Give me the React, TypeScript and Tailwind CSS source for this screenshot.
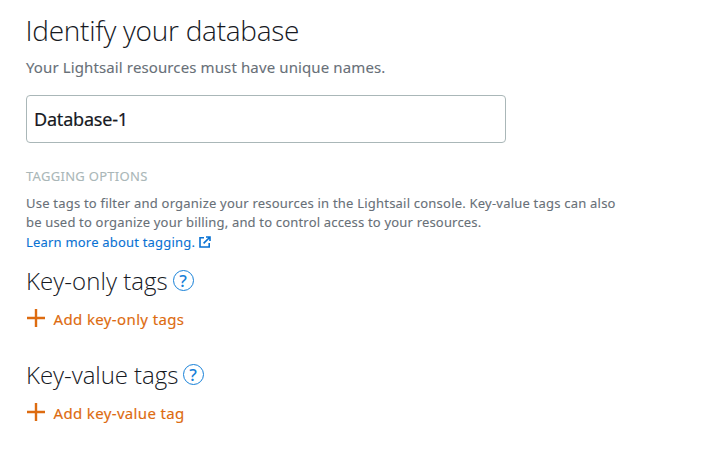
import React from 'react';

function ExternalIcon() {
  return (
    <svg className="-mt-px" width="12" height="12" viewBox="0 0 12 12" fill="none" stroke="#0972d3" strokeWidth="1.6">
      <path d="M5 1.8H1V11H10.2V7M7 1H11V5M10.8 1.2L4.6 7.4" />
    </svg>
  );
}

function TagSection({ title, action, titleClass, actionClass }: { title: string; action: string; titleClass: string; actionClass: string }) {
  return (
    <section className="h-[94px]">
      <div className="flex h-8 items-center">
        <h2 className={`-mt-[2px] shrink-0 font-['Open_Sans',sans-serif] whitespace-nowrap text-[24px] leading-8 font-light ${titleClass}`}>{title}</h2>
        <button className="-mt-[3px] flex h-[21px] w-[21px] shrink-0 items-center justify-center rounded-full border border-[#1680d8] text-[17px] leading-5 font-medium text-[#1680d8]">?</button>
      </div>
      <button className="mt-[9px] flex h-6 items-center text-[#dd6b10]">
        <svg className="-mt-[3px] mr-[8.5px] ml-px" width="18" height="18" viewBox="0 0 18 18" fill="none" stroke="currentColor" strokeWidth="2.4">
          <path d="M9 0V18M0 9H18" />
        </svg>
        <span className={`whitespace-nowrap text-[15px] leading-6 [-webkit-text-stroke:0.15px_currentColor] ${actionClass}`}>{action}</span>
      </button>
    </section>
  );
}

export default function App() {
  return (
    <main className="h-[461px] w-[704px] overflow-hidden bg-white pt-[10px] pl-[26px] font-['Noto_Sans',sans-serif] text-[#16191f]">
      <h1 className="-ml-[0.5px] h-10 font-['Open_Sans',sans-serif] text-[28px] leading-10 font-light tracking-[-0.26px] whitespace-nowrap">Identify your database</h1>
      <p className="mt-[5px] h-6 text-[15px] leading-6 tracking-[0.12px] whitespace-nowrap text-[#687078] [-webkit-text-stroke:0.1px_currentColor]">Your Lightsail resources must have unique names.</p>
      <input className="mt-4 block h-12 w-[480px] rounded-[4px] border border-[#aab7b8] bg-white px-[7px] text-[18px] tracking-[-0.2px] text-[#16191f] outline-none [-webkit-text-stroke:0.2px_currentColor]" defaultValue="Database-1" />
      <h3 className="mt-[23px] h-5 text-[13px] leading-5 font-normal tracking-[0.29px] whitespace-nowrap text-[#aab7b8] [-webkit-text-stroke:0.1px_currentColor]">TAGGING OPTIONS</h3>
      <div className="mt-[7px] h-[60px] text-[13px] leading-5 whitespace-nowrap text-[#687078] [-webkit-text-stroke:0.1px_currentColor]">
        <p className="h-5 tracking-[0.215px]">Use tags to filter and organize your resources in the Lightsail console. Key-value tags can also</p>
        <p className="-mt-px h-5 tracking-[0.18px]">be used to organize your billing, and to control access to your resources.</p>
        <a href="#" className="flex h-5 items-center gap-1 tracking-[0.2px] text-[#0972d3]">
          <span>Learn more about tagging.</span>
          <ExternalIcon />
        </a>
      </div>
      <div className="mt-[13px]">
        <TagSection title="Key-only tags" action="Add key-only tags" titleClass="w-[146.5px] tracking-[0.05px]" actionClass="tracking-[0.37px]" />
        <TagSection title="Key-value tags" action="Add key-value tag" titleClass="w-[156.5px] tracking-[-0.05px]" actionClass="tracking-[0.35px]" />
      </div>
    </main>
  );
}
